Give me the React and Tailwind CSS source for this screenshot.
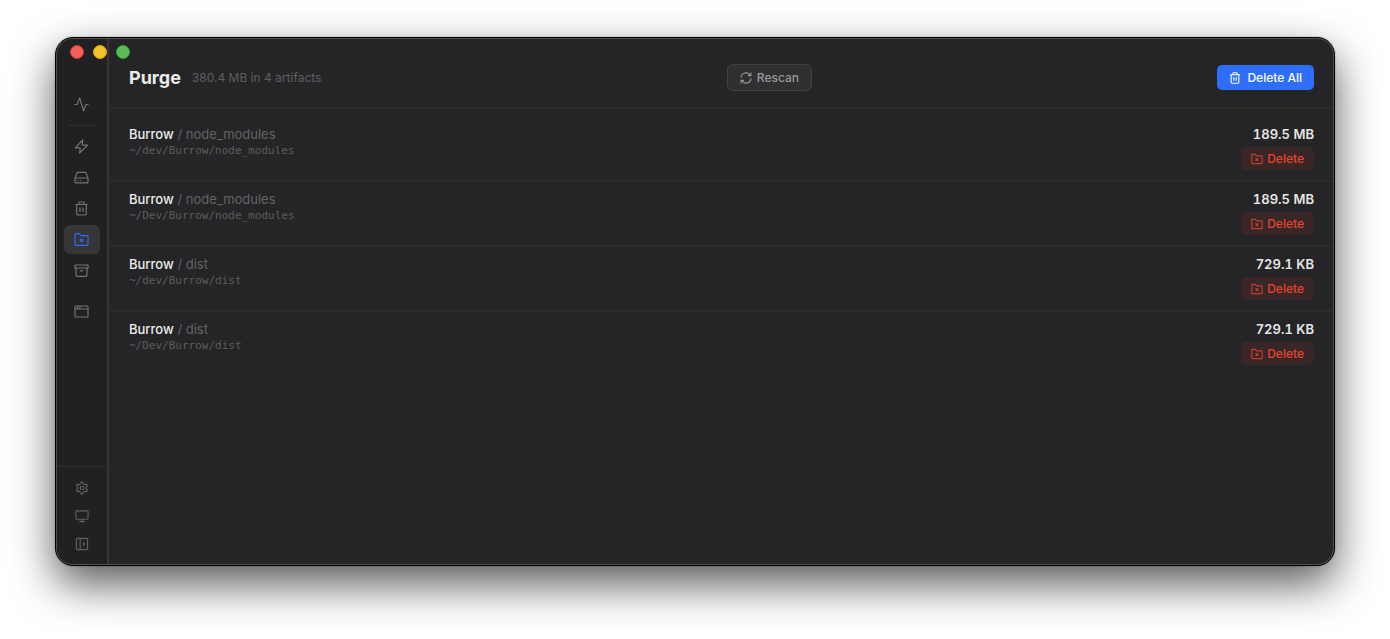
import React, { useState } from "react";

const icons = {
  activity: <path d="M1 8h2.6L6.2 1.6l3.9 12.8L12.4 8H15" />,
  bolt: <path d="M9.2 1.4 1.8 9.4h4.9l-.6 5.2 8-8H8.7z" />,
  drive: (
    <>
      <path d="M1.5 8.5h13v3.9a1 1 0 0 1-1 1h-11a1 1 0 0 1-1-1z" />
      <path d="m1.5 8.5 2-5.1a1 1 0 0 1 1-.6h7a1 1 0 0 1 1 .6l2 5.1" />
      <path d="M4 11h1M6.4 11h1" />
    </>
  ),
  trash: (
    <>
      <path d="M1.8 4h12.4M5.4 4V2.3a.8.8 0 0 1 .8-.8h3.6a.8.8 0 0 1 .8.8V4" />
      <path d="M3.2 4v9.2a1.3 1.3 0 0 0 1.3 1.3h7a1.3 1.3 0 0 0 1.3-1.3V4" />
      <path d="M6.5 7v4.5M9.5 7v4.5" />
    </>
  ),
  folder: (
    <>
      <path d="M1.5 3a.9.9 0 0 1 .9-.9h3.4l1.7 2h6a1 1 0 0 1 1 1v7.8a1 1 0 0 1-1 1h-11a1 1 0 0 1-1-1z" />
      <path d="m6.2 7.1 3.6 3.6M9.8 7.1l-3.6 3.6" />
    </>
  ),
  archive: (
    <>
      <path d="M1.5 2.5h13v3h-13zM2.6 5.5v7.3a1 1 0 0 0 1 1h8.8a1 1 0 0 0 1-1V5.5" />
      <path d="M6.3 8.4h3.4" />
    </>
  ),
  window: (
    <>
      <rect x="1.5" y="2.5" width="13" height="11" rx="1" />
      <path d="M1.5 5.5h13M4 2.8v2.4M6.4 2.8v2.4" />
    </>
  ),
  gear: (
    <>
      <path d="M6.5 3.6 7 1.7h2l.5 1.9 1.5.9 1.9-.6 1 1.8-1.4 1.4v1.8l1.4 1.4-1 1.8-1.9-.6-1.5.9-.5 1.9H7l-.5-1.9-1.5-.9-1.9.6-1-1.8 1.4-1.4V7.1L2.1 5.7l1-1.8 1.9.6z" />
      <circle cx="8" cy="8" r="1.9" />
    </>
  ),
  monitor: (
    <>
      <rect x="1.5" y="2.5" width="13" height="9" rx="1" />
      <path d="M8 11.5V14M5.2 14h5.6" />
    </>
  ),
  panel: (
    <>
      <rect x="2" y="2" width="12" height="12" rx="1" />
      <path d="M6 2v12M9 6l2 2-2 2" />
    </>
  ),
  refresh: (
    <>
      <path d="M1.7 7.5A6.3 6.3 0 0 1 13.5 4.9M14.3 8.5a6.3 6.3 0 0 1-11.8 2.6" />
      <path d="M14.2 1.2V5h-3.8M1.8 14.8V11h3.8" />
    </>
  ),
};

function Icon({ name, className, strokeWidth = 1.2 }) {
  return (
    <svg
      viewBox="0.5 0.5 15 15"
      fill="none"
      stroke="currentColor"
      strokeWidth={strokeWidth}
      strokeLinejoin="round"
      className={className}
      aria-hidden="true"
    >
      {icons[name]}
    </svg>
  );
}

const artifacts = [
  { name: "Burrow", kind: "node_modules", path: "~/dev/Burrow/node_modules", size: "189.5 MB" },
  { name: "Burrow", kind: "node_modules", path: "~/Dev/Burrow/node_modules", size: "189.5 MB" },
  { name: "Burrow", kind: "dist", path: "~/dev/Burrow/dist", size: "729.1 KB" },
  { name: "Burrow", kind: "dist", path: "~/Dev/Burrow/dist", size: "729.1 KB" },
];

const tools = [
  { id: "optimize", icon: "bolt" },
  { id: "disk", icon: "drive" },
  { id: "clean", icon: "trash" },
  { id: "purge", icon: "folder" },
  { id: "installers", icon: "archive" },
];

function NavButton({ id, icon, active, onSelect }) {
  return (
    <button
      type="button"
      aria-label={id}
      onClick={() => onSelect(id)}
      className={
        active
          ? "flex h-[29px] w-9 items-center justify-center rounded-md bg-[#363638] pr-px text-[#2f6df6]"
          : "flex h-[29px] w-9 items-center justify-center rounded-md pr-px text-[#757577]"
      }
    >
      <Icon name={icon} className="size-[15px]" />
    </button>
  );
}

function Sidebar() {
  const [current, setCurrent] = useState("purge");

  return (
    <nav className="flex w-[52px] shrink-0 flex-col items-center border-r-2 border-[#363638] bg-[#212123] pt-[51px]">
      <NavButton id="status" icon="activity" active={current === "status"} onSelect={setCurrent} />
      <div className="my-1.5 h-px w-7 bg-[#303032]" />
      <div className="flex flex-col gap-0.5">
        {tools.map((tool) => (
          <NavButton
            key={tool.id}
            id={tool.id}
            icon={tool.icon}
            active={current === tool.id}
            onSelect={setCurrent}
          />
        ))}
      </div>
      <div className="mt-3">
        <NavButton id="apps" icon="window" active={current === "apps"} onSelect={setCurrent} />
      </div>
      <div className="mt-auto flex w-full flex-col items-center border-t border-[#2f2f31] pt-[7px] pb-1.5 text-[#626264]">
        {["gear", "monitor", "panel"].map((name) => (
          <button
            key={name}
            type="button"
            aria-label={name}
            className="flex h-7 w-9 items-center justify-center"
          >
            <Icon name={name} className="size-3.5" />
          </button>
        ))}
      </div>
    </nav>
  );
}

function ArtifactRow({ artifact, last }) {
  return (
    <li
      className={
        last
          ? "flex justify-between pt-[7px] pr-[19px] pb-2.5 pl-5"
          : "flex justify-between border-b-2 border-[#2b2b2d] pt-[7px] pr-[19px] pb-2.5 pl-5"
      }
    >
      <div className="flex flex-col gap-px">
        <p className="text-[13px] leading-5 text-[#636365]">
          <span className="font-medium text-[#ececec]">{artifact.name}</span> / {artifact.kind}
        </p>
        <p className="font-['DejaVu_Sans_Mono',monospace] text-[11px] leading-3 text-[#5c5c5e]">
          {artifact.path}
        </p>
      </div>
      <div className="flex flex-col items-end gap-[3px]">
        <span className="text-[13px] leading-5 font-semibold text-[#e6e6e6] tabular-nums">
          {artifact.size}
        </span>
        <button
          type="button"
          className="flex h-[23px] items-center gap-1 rounded-[5px] bg-[#392727] px-2.5 text-xs font-medium text-[#e5442f]"
        >
          <Icon name="folder" className="size-3 opacity-80" strokeWidth={1.5} />
          Delete
        </button>
      </div>
    </li>
  );
}

export default function App() {
  return (
    <div className="h-screen bg-white px-[55px] pt-[37px] pb-[73px] font-['Inter',sans-serif]">
      <div className="relative h-full rounded-[18px] border border-black bg-[#252527] shadow-[0_0_2px_rgba(0,0,0,0.3),0_18px_44px_rgba(0,0,0,0.65)]">
        <div className="absolute top-[7px] left-3.5 flex gap-[9px]">
          <span className="size-3.5 rounded-full border border-[#e2332b] bg-[#ee6059]" />
          <span className="size-3.5 rounded-full border border-[#e0a516] bg-[#f4c02c]" />
          <span className="size-3.5 rounded-full border border-[#2fa82f] bg-[#5dbb57]" />
        </div>
        <div className="flex h-full overflow-hidden rounded-[17px] border border-[#505052]">
          <Sidebar />
          <main className="flex-1">
            <header className="flex items-center justify-between border-b-2 border-[#2b2b2d] pt-[25px] pr-[19px] pb-4 pl-5">
              <div className="flex items-center gap-[11px]">
                <h1 className="text-lg leading-6 font-bold text-[#ececec]">Purge</h1>
                <span className="text-xs text-[#5f5f61]">380.4 MB in 4 artifacts</span>
              </div>
              <button
                type="button"
                className="flex h-[27px] items-center gap-[5px] rounded-md border border-[#414143] bg-[#303032] px-3 text-xs font-medium text-[#98989a]"
              >
                <Icon name="refresh" className="size-3" strokeWidth={1.4} />
                Rescan
              </button>
              <button
                type="button"
                className="flex h-[25px] items-center gap-1.5 rounded-[5px] bg-[#2f6dfb] px-3 text-xs font-medium text-white"
              >
                <Icon name="trash" className="size-3" strokeWidth={1.4} />
                Delete All
              </button>
            </header>
            <ul className="pt-2">
              {artifacts.map((artifact, i) => (
                <ArtifactRow
                  key={artifact.path}
                  artifact={artifact}
                  last={i === artifacts.length - 1}
                />
              ))}
            </ul>
          </main>
        </div>
      </div>
    </div>
  );
}
